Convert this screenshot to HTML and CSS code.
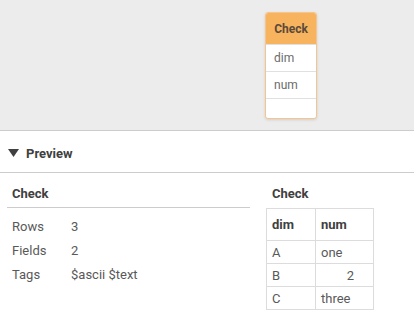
FILE: index.html
```html
<!DOCTYPE html>
<html>
<head>
<meta charset="utf-8">
<link rel="stylesheet" href="styles.css">
</head>
<body>
<div class="canvas">
  <div class="node">
    <div class="node-head">Check</div>
    <div class="node-row">dim</div>
    <div class="node-row">num</div>
    <div class="node-row empty"></div>
  </div>
</div>
<div class="preview-bar">
  <svg class="tri" width="11" height="8" viewBox="0 0 11 8"><path d="M0 0 H11 L5.5 8 Z" fill="#404040"/></svg>
  <span>Preview</span>
</div>
<div class="content">
  <div class="meta">
    <div class="meta-title">Check</div>
    <div class="meta-grid">
      <div class="k">Rows</div><div class="v">3</div>
      <div class="k">Fields</div><div class="v">2</div>
      <div class="k">Tags</div><div class="v">$ascii $text</div>
    </div>
  </div>
  <div class="data">
    <div class="data-title">Check</div>
    <table class="tbl">
      <tr><th>dim</th><th>num</th></tr>
      <tr><td>A</td><td>one</td></tr>
      <tr><td>B</td><td><span class="num">2</span></td></tr>
      <tr><td>C</td><td>three</td></tr>
    </table>
  </div>
</div>
</body>
</html>
```
FILE: styles.css
```css
html, body { margin: 0; padding: 0; background: #fff; }
body { font-family: Roboto, "Noto Sans", sans-serif; font-size: 13px; color: #595959; width: 414px; height: 333px; overflow: hidden; }
.canvas { position: relative; height: 130px; background: #ececec; border-bottom: 1px solid #cccccc; }
.node { position: absolute; left: 265px; top: 12px; width: 50px; border: 1px solid #f6c58e; border-radius: 3px; background: #fff; box-shadow: 0 1px 3px rgba(0,0,0,0.12); overflow: hidden; }
.node-head { height: 31px; background: #f8b35f; color: #5a4a3a; font-weight: bold; font-size: 12px; display: flex; align-items: center; justify-content: center; }
.node-row { height: 26px; border-top: 1px solid #e0e0e0; display: flex; align-items: center; padding-left: 8px; font-size: 12px; color: #6b6b6b; }
.node-row.empty { height: 19px; }
.preview-bar { height: 38px; padding-top: 3px; border-bottom: 1px solid #cccccc; display: flex; align-items: center; padding-left: 8px; gap: 7px; font-weight: bold; color: #404040; font-size: 13px; }
.tri { display: block; }
.content { display: flex; padding-top: 11px; }
.meta { margin-left: 7px; width: 243px; }
.meta-title { font-weight: bold; color: #404040; padding-left: 5px; height: 23px; line-height: 19px; border-bottom: 1px solid #cccccc; }
.meta-grid { display: grid; grid-template-columns: 59px auto; row-gap: 0; padding-left: 5px; padding-top: 10px; }
.meta-grid div { height: 24px; line-height: 18px; }
.data { margin-left: 16px; }
.data-title { font-weight: bold; color: #404040; padding-left: 6px; height: 24px; line-height: 19px; }
.tbl { border-collapse: collapse; font-size: 13px; }
.tbl th, .tbl td { border: 1px solid #dcdcdc; text-align: left; padding: 0 0 0 5px; color: #595959; }
.tbl th { height: 31px; font-weight: bold; color: #404040; }
.tbl td { height: 22px; }
.tbl tr > :first-child { width: 43px; }
.tbl tr > :last-child { width: 52px; }
.num { display: block; text-align: right; padding-right: 19px; }
```
